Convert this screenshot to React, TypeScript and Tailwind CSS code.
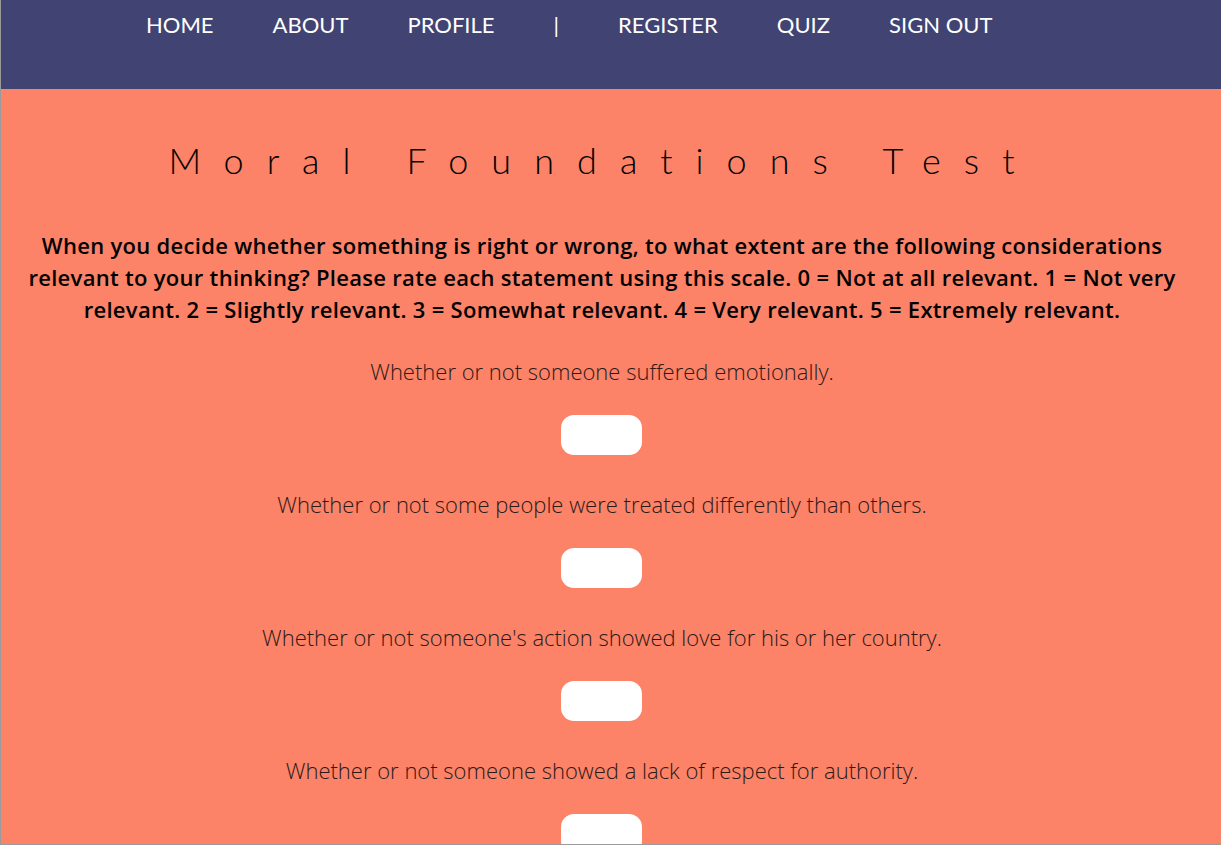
import React from 'react';

const links = ['HOME', 'ABOUT', 'PROFILE', '|', 'REGISTER', 'QUIZ', 'SIGN OUT'];

const statements = [
  'Whether or not someone suffered emotionally.',
  'Whether or not some people were treated differently than others.',
  "Whether or not someone's action showed love for his or her country.",
  'Whether or not someone showed a lack of respect for authority.',
];

export default function App() {
  return (
    <div
      className="h-[845px] overflow-hidden border-l border-b border-[#9a9a9a] bg-[#fc8268]"
      style={{ fontFamily: 'Lato, "Open Sans", sans-serif' }}
    >
      {/* Nav bar */}
      <nav className="h-[89px] bg-[#414473]">
        <ul className="flex pl-[145px] pt-[9px] gap-[59px] text-[22px] leading-[32px] text-white">
          {links.map((l) => (
            <li key={l}>{l}</li>
          ))}
        </ul>
      </nav>

      <main className="flex flex-col items-center pr-[18px] text-black">
        <h1 className="mt-[49px] pl-[2px] text-[36px] leading-[44px] font-light tracking-[0.64em]">
          Moral Foundations Test
        </h1>

        <p className="mt-[47px] px-[20px] text-center text-[22px] leading-[32px] font-semibold tracking-[0.3px] font-['Open_Sans',sans-serif]">
          When you decide whether something is right or wrong, to what extent are the following considerations
          relevant to your thinking? Please rate each statement using this scale. 0 = Not at all relevant. 1 = Not very
          relevant. 2 = Slightly relevant. 3 = Somewhat relevant. 4 = Very relevant. 5 = Extremely relevant.
        </p>

        <div className="mt-[32px] flex flex-col items-center gap-[35px]">
          {statements.map((s) => (
            <div key={s} className="flex flex-col items-center gap-[30px]">
              <label className="text-[22px] leading-[28px] font-light text-[#2b1a16] font-['Open_Sans',sans-serif]">
                {s}
              </label>
              <input type="text" className="w-[81px] h-[40px] rounded-[13px] bg-white outline-none" />
            </div>
          ))}
        </div>
      </main>
    </div>
  );
}
